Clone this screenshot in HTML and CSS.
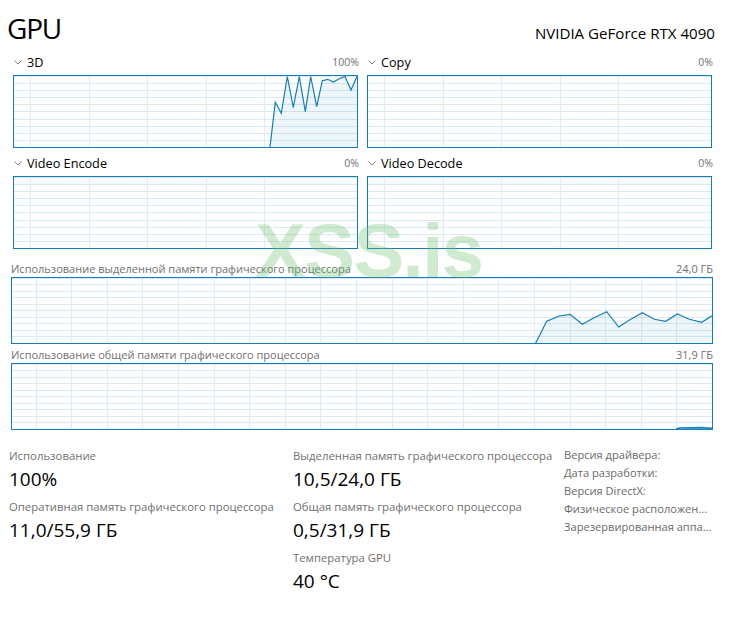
FILE: index.html
```html
<!DOCTYPE html>
<html lang="ru">
<head>
<meta charset="utf-8">
<title>GPU</title>
<link rel="stylesheet" href="styles.css">
</head>
<body>
<div class="page">
  <header class="head">
    <h1 class="title">GPU</h1>
    <div class="model">NVIDIA GeForce RTX 4090</div>
  </header>

  <section class="engines">
    <div class="engine">
      <div class="engine-head">
        <span class="eng-name"><svg class="chev" viewBox="0 0 8 5" width="8" height="5"><polyline points="0.5,0.5 4,4 7.5,0.5"/></svg>3D</span>
        <span class="pct">100%</span>
      </div>
      <div class="chart small">
        <svg viewBox="0 0 343 71" preserveAspectRatio="none">
          <polygon class="area" points="256,71 261.3,26.3 267.3,37.3 273.3,0.5 279.3,31.3 285.3,0.5 291.3,35.7 296.7,0.5 302.7,30.7 308.3,4.7 313.7,3.3 319.3,6 325.3,2.7 331,0.5 337,14 343,0.5 343,71"/>
          <polyline class="line" points="256,71 261.3,26.3 267.3,37.3 273.3,0.5 279.3,31.3 285.3,0.5 291.3,35.7 296.7,0.5 302.7,30.7 308.3,4.7 313.7,3.3 319.3,6 325.3,2.7 331,0.5 337,14 343,0.5"/>
        </svg>
      </div>
    </div>
    <div class="engine">
      <div class="engine-head">
        <span class="eng-name"><svg class="chev" viewBox="0 0 8 5" width="8" height="5"><polyline points="0.5,0.5 4,4 7.5,0.5"/></svg>Copy</span>
        <span class="pct">0%</span>
      </div>
      <div class="chart small"></div>
    </div>
    <div class="engine">
      <div class="engine-head">
        <span class="eng-name"><svg class="chev" viewBox="0 0 8 5" width="8" height="5"><polyline points="0.5,0.5 4,4 7.5,0.5"/></svg>Video Encode</span>
        <span class="pct">0%</span>
      </div>
      <div class="chart small"></div>
    </div>
    <div class="engine">
      <div class="engine-head">
        <span class="eng-name"><svg class="chev" viewBox="0 0 8 5" width="8" height="5"><polyline points="0.5,0.5 4,4 7.5,0.5"/></svg>Video Decode</span>
        <span class="pct">0%</span>
      </div>
      <div class="chart small"></div>
    </div>
  </section>

  <section class="mem first">
    <div class="mem-head">
      <span>Использование выделенной памяти графического процессора</span>
      <span>24,0 ГБ</span>
    </div>
    <div class="chart wide">
      <svg viewBox="0 0 700 65" preserveAspectRatio="none">
        <polygon class="area" points="523.7,65 534.7,43.3 547.3,38 558,36.3 570.3,46.3 582,39.7 594.7,33.7 606.7,49 618.7,41.3 630.3,34.7 642.3,41.3 653.7,43.3 665.3,36 677.3,41.3 689.7,44.3 700,37.7 700,65"/>
        <polyline class="line" points="523.7,65 534.7,43.3 547.3,38 558,36.3 570.3,46.3 582,39.7 594.7,33.7 606.7,49 618.7,41.3 630.3,34.7 642.3,41.3 653.7,43.3 665.3,36 677.3,41.3 689.7,44.3 700,37.7"/>
      </svg>
    </div>
  </section>

  <section class="mem second">
    <div class="mem-head">
      <span>Использование общей памяти графического процессора</span>
      <span>31,9 ГБ</span>
    </div>
    <div class="chart wide">
      <svg viewBox="0 0 700 65" preserveAspectRatio="none">
        <polygon class="area" points="664,65 668,64 690,63.6 698,64.2 700,64 700,65"/>
        <polyline class="line thick" points="664,65 668,64 690,63.6 698,64.2 700,64"/>
      </svg>
    </div>
  </section>

  <section class="stats">
    <div class="col">
      <div class="stat">
        <div class="label">Использование</div>
        <div class="value">100%</div>
      </div>
      <div class="stat">
        <div class="label">Оперативная память графического процессора</div>
        <div class="value">11,0/55,9 ГБ</div>
      </div>
    </div>
    <div class="col">
      <div class="stat">
        <div class="label">Выделенная память графического процессора</div>
        <div class="value">10,5/24,0 ГБ</div>
      </div>
      <div class="stat">
        <div class="label">Общая память графического процессора</div>
        <div class="value">0,5/31,9 ГБ</div>
      </div>
      <div class="stat">
        <div class="label">Температура GPU</div>
        <div class="value">40 °C</div>
      </div>
    </div>
    <ul class="props">
      <li>Версия драйвера:</li>
      <li>Дата разработки:</li>
      <li>Версия DirectX:</li>
      <li title="Физическое расположение:">Физическое расположен...</li>
      <li title="Зарезервированная аппаратная память:">Зарезервированная аппа...</li>
    </ul>
  </section>

  <div class="watermark">XSS.is</div>
</div>
</body>
</html>
```

FILE: styles.css
```css
* { box-sizing: border-box; }
html, body { margin: 0; background: #fff; }
body { font-family: "Open Sans", "Noto Sans", sans-serif; color: #000; }

.page {
  position: relative;
  width: 738px;
  height: 630px;
  padding: 0 25px 0 9px;
  overflow: hidden;
}

.head {
  display: flex;
  justify-content: space-between;
  align-items: baseline;
  padding-top: 6px;
  height: 50px;
  margin-right: -2px;
}
.title {
  margin: 0 0 0 -2px;
  font-weight: 400;
  font-size: 28px;
  letter-spacing: -1.2px;
  line-height: 44px;
}
.model { font-size: 15.1px; }

.engines {
  display: grid;
  grid-template-columns: 1fr 1fr;
  column-gap: 9px;
  row-gap: 5px;
  margin: 2px 1px 0 4px;
}
.engine-head {
  height: 20px;
  display: flex;
  align-items: center;
  justify-content: space-between;
  margin-bottom: 3px;
}
.eng-name {
  display: flex;
  align-items: center;
  font-size: 12.7px;
}
.chev {
  margin: 0 5px 0 1px;
  fill: none;
  stroke: #808080;
  stroke-width: 1;
}
.pct {
  font-size: 10.5px;
  color: #707070;
  margin-right: -1px;
}

.chart {
  border: 1px solid #117dbb;
  background-color: #fff;
}
.chart svg { display: block; width: 100%; height: 100%; }
.chart .line { fill: none; stroke: #117dbb; stroke-width: 1.2; stroke-linejoin: miter; }
.chart .line.thick { stroke-width: 1.6; }
.chart .area { fill: rgba(17, 125, 187, 0.07); }

.chart.small {
  height: 73px;
  background-image:
    repeating-linear-gradient(to right, transparent 0 57.4px, #d9eaf4 57.4px 58.4px),
    repeating-linear-gradient(to bottom, transparent 0 6.1px, #d9eaf4 6.1px 7.1px);
  background-position: -41.1px 0, 0 1px;
}
.chart.wide {
  height: 67px;
  margin-left: 2px;
  background-image:
    repeating-linear-gradient(to right, transparent 0 34.6px, #d9eaf4 34.6px 35.6px),
    repeating-linear-gradient(to bottom, transparent 0 5.5px, #d9eaf4 5.5px 6.5px);
  background-position: -10.9px 0, 0 1px;
}

.mem.first { margin-top: 10px; }
.mem.second { margin-top: 1px; }
.mem-head {
  height: 18px;
  display: flex;
  align-items: center;
  justify-content: space-between;
  margin-left: 2px;
  font-size: 11px;
  color: #707070;
}

.stats {
  display: grid;
  grid-template-columns: 284px 271px 1fr;
  margin-top: 18px;
}
.stat { margin-bottom: 7px; }
.label {
  font-size: 11.35px;
  line-height: 16px;
  color: #707070;
  white-space: nowrap;
}
.value {
  font-size: 19px;
  line-height: 26px;
  margin-top: 2px;
}
.props {
  list-style: none;
  margin: -2px 0 0;
  padding: 0;
  min-width: 0;
}
.props li {
  font-size: 11.1px;
  line-height: 18px;
  color: #6a6a6a;
  white-space: nowrap;
}

.watermark {
  position: absolute;
  left: 255px;
  top: 207px;
  font-family: "Liberation Sans", Arial, sans-serif;
  font-weight: 700;
  font-size: 76px;
  letter-spacing: -1.5px;
  color: rgba(110, 190, 110, 0.33);
  pointer-events: none;
}
```
